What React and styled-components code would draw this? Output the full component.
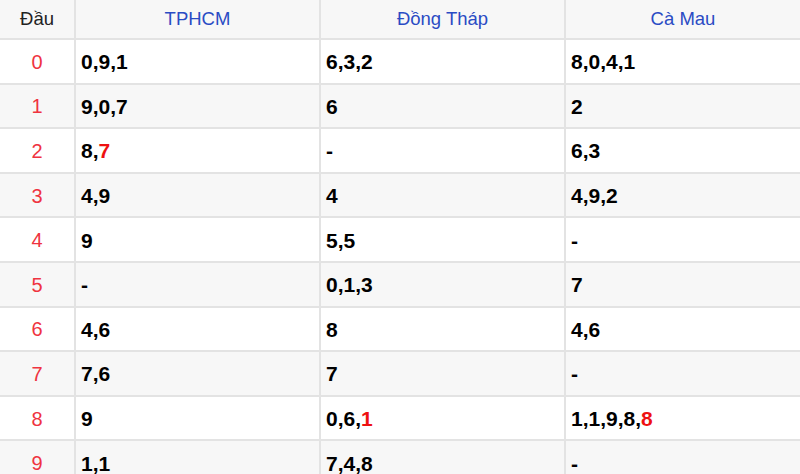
import React from 'react';
import styled, { createGlobalStyle } from 'styled-components';

const GlobalStyle = createGlobalStyle`
  html, body {
    margin: 0;
    padding: 0;
    background: #ffffff;
    font-family: "Liberation Sans", Arial, sans-serif;
    overflow: hidden;
  }
`;

const Table = styled.table`
  width: 800px;
  border-collapse: collapse;
  table-layout: fixed;
`;

const HeadCell = styled.th`
  height: 38px;
  padding: 0;
  background: #f7f7f7;
  font-weight: normal;
  font-size: 18.5px;
  color: ${props => (props.$first ? '#222' : '#2a4bc4')};
  text-align: center;
  border-right: 2px solid #e3e3e3;
  border-bottom: 2px solid #e3e3e3;
  &:last-child {
    border-right: none;
  }
`;

const Row = styled.tr`
  background: ${props => (props.$odd ? '#f7f7f7' : '#ffffff')};
`;

const HeadNum = styled.td`
  height: 40.6px;
  padding: 2px 0 0;
  text-align: center;
  font-size: 20px;
  color: #ef3340;
  border-right: 2px solid #e3e3e3;
  border-bottom: 2px solid #e3e3e3;
`;

const Cell = styled.td`
  height: 40.6px;
  padding: 2px 0 0 5px;
  font-size: 21px;
  font-weight: bold;
  color: #000;
  border-right: 2px solid #e3e3e3;
  border-bottom: 2px solid #e3e3e3;
  &:last-child {
    border-right: none;
  }
`;

const Hit = styled.span`
  color: #ee1111;
`;

const provinces = ['TPHCM', 'Đồng Tháp', 'Cà Mau'];

// each value: list of digits; a trailing "*" marks the red one
const rows = [
  ['0,9,1', '6,3,2', '8,0,4,1'],
  ['9,0,7', '6', '2'],
  ['8,7*', '-', '6,3'],
  ['4,9', '4', '4,9,2'],
  ['9', '5,5', '-'],
  ['-', '0,1,3', '7'],
  ['4,6', '8', '4,6'],
  ['7,6', '7', '-'],
  ['9', '0,6,1*', '1,1,9,8,8*'],
  ['1,1', '7,4,8', '-'],
];

const Value = ({ text }) => {
  if (!text.endsWith('*')) return text;
  const body = text.slice(0, -1);
  const idx = body.lastIndexOf(',');
  return (
    <>
      {body.slice(0, idx + 1)}
      <Hit>{body.slice(idx + 1)}</Hit>
    </>
  );
};

const App = () => (
  <>
    <GlobalStyle />
    <Table>
      <colgroup>
        <col style={{ width: 75 }} />
        <col style={{ width: 245 }} />
        <col style={{ width: 245 }} />
        <col />
      </colgroup>
      <thead>
        <tr>
          <HeadCell $first>Đầu</HeadCell>
          {provinces.map(p => (
            <HeadCell key={p}>{p}</HeadCell>
          ))}
        </tr>
      </thead>
      <tbody>
        {rows.map((r, i) => (
          <Row key={i} $odd={i % 2 === 1}>
            <HeadNum>{i}</HeadNum>
            {r.map((v, j) => (
              <Cell key={j}>
                <Value text={v} />
              </Cell>
            ))}
          </Row>
        ))}
      </tbody>
    </Table>
  </>
);

export default App;
